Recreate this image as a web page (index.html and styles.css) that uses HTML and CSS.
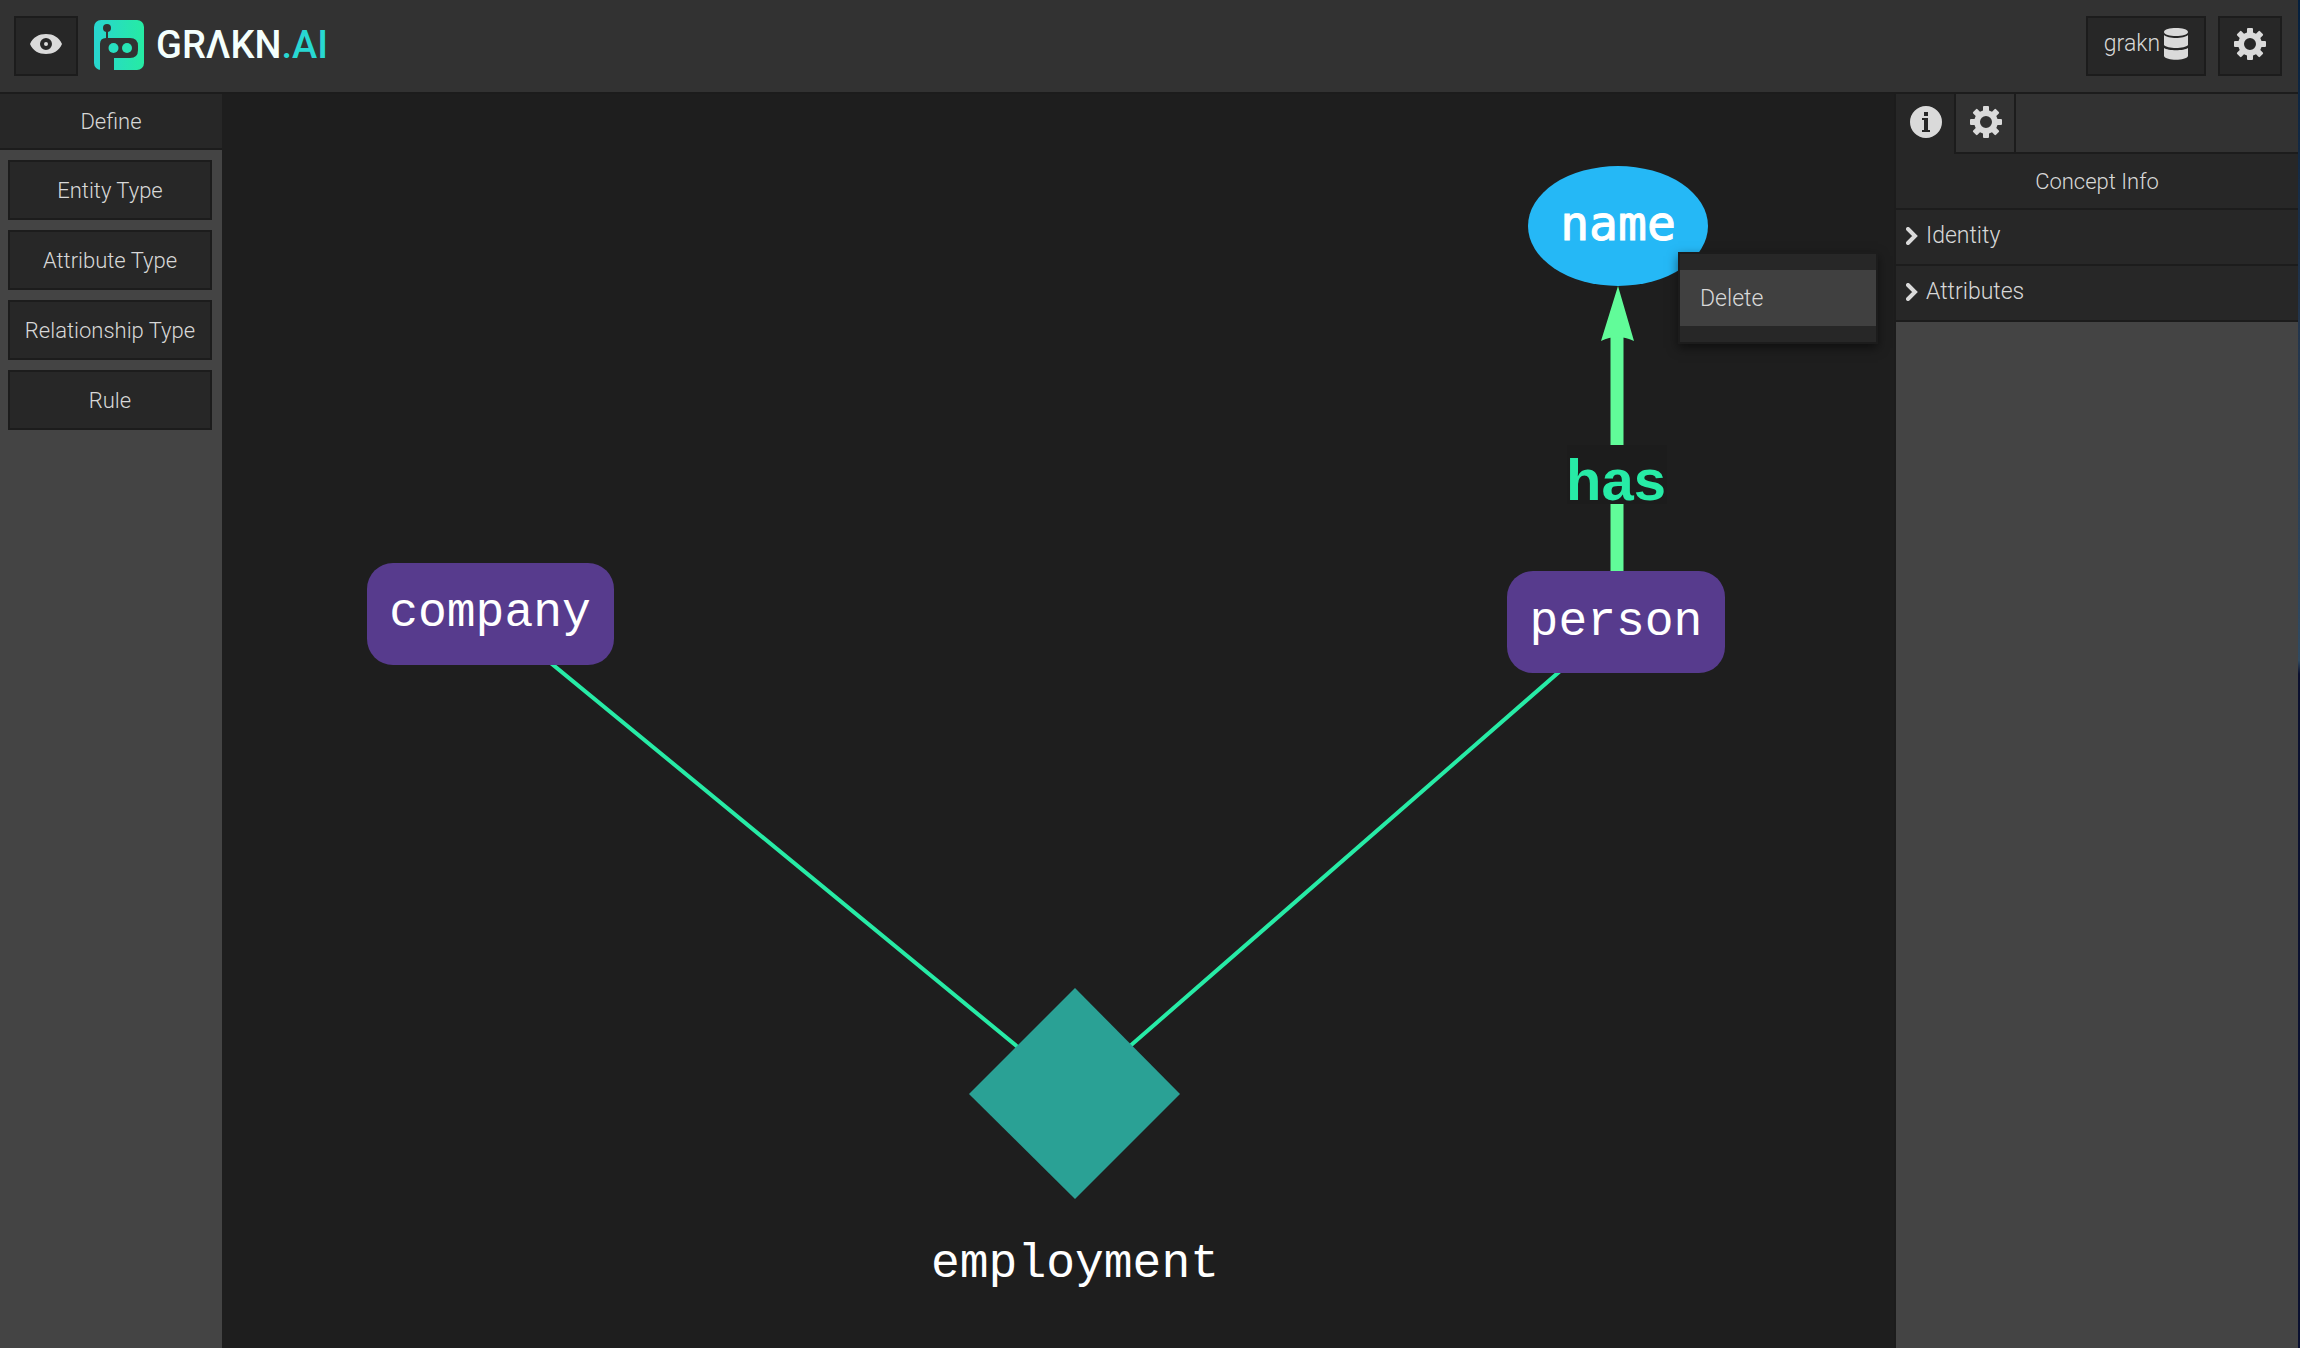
FILE: index.html
```html
<!DOCTYPE html>
<html lang="en">
<head>
<meta charset="utf-8">
<meta name="viewport" content="width=device-width, initial-scale=1">
<title>GRAKN.AI Workbase</title>
<link rel="stylesheet" href="styles.css">
</head>
<body>
<svg class="defs" aria-hidden="true">
  <defs>
    <symbol id="gear" viewBox="0 0 32 32">
      <path fill-rule="evenodd" d="M13 1q0-1 1-1h4q1 0 1 1v3.500l3 1.200 2.500-2.500q.8-.7 1.500 0l2.800 2.800q.7.700 0 1.500l-2.500 2.500 1.200 3H31q1 0 1 1v4q0 1-1 1h-3.500l-1.200 3 2.500 2.500q.7.800 0 1.500L26 28.800q-.7.700-1.500 0L22 26.300l-3 1.200V31q0 1-1 1h-4q-1 0-1-1v-3.500l-3-1.200-2.500 2.500q-.8.700-1.500 0L3.200 26q-.7-.7 0-1.500L5.700 22l-1.200-3H1q-1 0-1-1v-4q0-1 1-1h3.500l1.200-3-2.500-2.500q-.7-.8 0-1.500L6 3.200q.7-.7 1.500 0L10 5.700l3-1.200ZM16 10a6 6 0 1 0 0 12a6 6 0 0 0 0-12Z"/>
    </symbol>
  </defs>
</svg>
<div class="app">
  <header class="topbar">
    <button class="tool" type="button" aria-label="Toggle view">
      <svg class="icon" viewBox="0 0 32 32"><path fill-rule="evenodd" d="M0 16C3 9 9 6 16 6s13 3 16 10c-3 7-9 10-16 10S3 23 0 16ZM16 10a6 6 0 1 0 0 12a6 6 0 0 0 0-12ZM16 14a2 2 0 1 1 0 4a2 2 0 0 1 0-4Z"/></svg>
    </button>
    <a class="brand" href="#">
      <svg class="brand-mark" viewBox="0 0 50 50" aria-hidden="true">
        <defs><linearGradient id="mint"><stop offset="0" stop-color="#28d5d0"/><stop offset="1" stop-color="#26eba3"/></linearGradient></defs>
        <rect width="50" height="50" rx="7" fill="url(#mint)"/>
        <path fill="#323232" d="M6 50V24q0-6 6-6h24q8 0 8 8v4q0 8-8 8H20v12Z"/>
        <path fill="#323232" d="M12 7h2v13h-2Z"/>
        <circle cx="13" cy="8" r="4" fill="#323232"/>
        <circle cx="19.500" cy="28" r="5" fill="#27dfc0"/>
        <circle cx="33" cy="28" r="5" fill="#27e4b5"/>
      </svg>
      <span class="brand-name">GRΛKN<span class="brand-tld">.AI</span></span>
    </a>
    <button class="tool keyspace" type="button">grakn<svg class="icon-db" viewBox="0 0 24 32" aria-hidden="true"><path d="M0 4C0-1.300 24-1.300 24 4S0 9.300 0 4ZM0 7c4 4 20 4 24 0v10c-3 4-21 4-24 0ZM0 20c4 3 20 3 24 0v8c-2 5-22 5-24 0Z"/></svg></button>
    <button class="tool" type="button" aria-label="Settings"><svg class="icon"><use href="#gear"/></svg></button>
  </header>
  <div class="workspace">
    <nav class="sidebar">
      <h2 class="title">Define</h2>
      <div class="types">
        <button class="type" type="button">Entity Type</button>
        <button class="type" type="button">Attribute Type</button>
        <button class="type" type="button">Relationship Type</button>
        <button class="type" type="button">Rule</button>
      </div>
    </nav>
    <main class="canvas">
      <svg class="graph" width="1674" height="1250" role="img" aria-label="Schema graph">
        <path class="role" d="M285 533 853 1000 1384 537"/>
        <path class="owns" d="M1395 480V240"/>
        <path class="arrow" d="M1396 192 1412 247Q1395 239 1379 247Z"/>
        <rect class="label-bg" x="1345" y="351" width="100" height="59"/>
        <text class="edge-label" x="1394" y="406">has</text>
        <ellipse class="attribute" cx="1396" cy="132" rx="90" ry="60"/>
        <text class="attribute-label" x="1396" y="146">name</text>
        <rect class="entity" x="145" y="469" width="247" height="102" rx="26"/>
        <text class="node-label" x="268" y="532">company</text>
        <rect class="entity" x="1285" y="477" width="218" height="102" rx="26"/>
        <text class="node-label" x="1394" y="541">person</text>
        <path class="relationship" d="M853 894 958 1000 853 1105 747 1000Z"/>
        <text class="node-label" x="853" y="1183">employment</text>
      </svg>
      <div class="menu"><button class="menu-item" type="button">Delete</button></div>
    </main>
    <aside class="panel">
      <div class="tabs">
        <button class="tab active" type="button" aria-label="Concept info"><svg class="icon" viewBox="0 0 32 32"><path fill-rule="evenodd" d="M16 0a16 16 0 1 0 0 32a16 16 0 0 0 0-32ZM14 6h4v4h-4ZM12 12h6v12h2v2h-8v-2h2V14h-2Z"/></svg></button>
        <button class="tab" type="button" aria-label="Display settings"><svg class="icon"><use href="#gear"/></svg></button>
      </div>
      <h2 class="title">Concept Info</h2>
      <button class="section" type="button"><svg class="chevron" viewBox="0 0 12 18"><path d="m2 2 7 7-7 7"/></svg>Identity</button>
      <button class="section" type="button"><svg class="chevron" viewBox="0 0 12 18"><path d="m2 2 7 7-7 7"/></svg>Attributes</button>
    </aside>
  </div>
</div>
</body>
</html>
```
FILE: styles.css
```css
* { box-sizing: border-box; }

body {
  margin: 0;
  background: #1e1e1e;
  color: #d8d8d8;
  font: 300 22px/32px Roboto, "Liberation Sans", sans-serif;
}

button {
  margin: 0;
  padding: 0;
  border: 0;
  background: none;
  color: inherit;
  font: inherit;
  cursor: pointer;
}

.defs { position: absolute; width: 0; height: 0; }

.app {
  display: flex;
  flex-direction: column;
  min-height: 100vh;
  padding-right: 2px;
  background: linear-gradient(#04203f, #22354d 24%, #2f4a62 49%, #0a1030 50%);
}

.topbar {
  display: flex;
  align-items: center;
  gap: 12px;
  height: 94px;
  padding: 0 16px 0 14px;
  border-bottom: 2px solid #1c1c1c;
  background: #323232;
}

.tool {
  display: flex;
  align-items: center;
  justify-content: center;
  width: 64px;
  height: 60px;
  padding-bottom: 4px;
  border: 2px solid #1c1c1c;
  background: #272727;
}

.icon { width: 32px; height: 32px; fill: #dadada; }

.brand {
  display: flex;
  align-items: center;
  gap: 12px;
  margin: 0 auto 0 4px;
  padding-bottom: 2px;
  color: #f4fffd;
  text-decoration: none;
}

.brand-mark { width: 50px; height: 50px; }

.brand-name { font-size: 38px; font-weight: 500; }

.brand-tld { color: #28d8d2; }

.keyspace { width: 120px; gap: 4px; font-size: 23px; }

.icon-db { width: 24px; height: 32px; fill: #dadada; }

.workspace {
  display: flex;
  flex: 1;
}

.sidebar {
  width: 222px;
  background: #444;
}

.title {
  margin: 0;
  height: 56px;
  padding-top: 12px;
  border-bottom: 2px solid #1c1c1c;
  background: #272727;
  font-size: 22px;
  font-weight: 300;
  text-align: center;
}

.types {
  display: flex;
  flex-direction: column;
  gap: 10px;
  padding: 10px 10px 10px 8px;
}

.type {
  height: 60px;
  padding-top: 2px;
  border: 2px solid #1c1c1c;
  background: #272727;
}

.canvas {
  position: relative;
  flex: 1;
  min-width: 0;
  background: #1e1e1e;
}

.graph { display: block; }

.role { fill: none; stroke: #27eba6; stroke-width: 4; }
.owns { fill: none; stroke: #61fc99; stroke-width: 13; }
.arrow { fill: #61fc99; }
.label-bg { fill: #1c1c1c; }
.entity { fill: #573b8d; }
.attribute { fill: #25b8f6; }
.relationship { fill: #2aa195; }

.graph text { text-anchor: middle; }

.edge-label {
  fill: #27eba6;
  font: 700 58px "Liberation Sans", sans-serif;
}

.node-label {
  fill: #fff;
  font: 400 48px "Liberation Mono", monospace;
}

.attribute-label {
  fill: #fff;
  font: 400 48px "DejaVu Sans Mono", monospace;
  stroke: #fff;
  stroke-width: 1;
}

.menu {
  position: absolute;
  top: 158px;
  left: 1456px;
  width: 200px;
  padding: 16px 0;
  border: 2px solid #1c1c1c;
  background: #272727;
  box-shadow: 0 4px 10px rgba(0, 0, 0, 0.5);
}

.menu-item {
  display: block;
  width: 100%;
  height: 56px;
  padding: 2px 20px 0;
  background: #404040;
  font-size: 23px;
  text-align: left;
}

.panel {
  width: 404px;
  border-left: 2px solid #1c1c1c;
  background: #444;
}

.tabs {
  display: flex;
  height: 60px;
  background: linear-gradient(#1c1c1c, #1c1c1c) bottom / 100% 2px no-repeat #323232;
}

.tab {
  display: flex;
  align-items: center;
  justify-content: center;
  width: 60px;
  padding: 0 0 4px 2px;
  border-right: 2px solid #1c1c1c;
}

.tab.active { background: #272727; }

.section {
  display: flex;
  align-items: center;
  gap: 8px;
  width: 100%;
  height: 56px;
  padding: 0 0 2px 10px;
  border-bottom: 2px solid #1c1c1c;
  background: #272727;
  font-size: 23px;
}

.chevron {
  width: 12px;
  height: 18px;
  fill: none;
  stroke: #dadada;
  stroke-width: 4;
  stroke-linecap: round;
}
```
